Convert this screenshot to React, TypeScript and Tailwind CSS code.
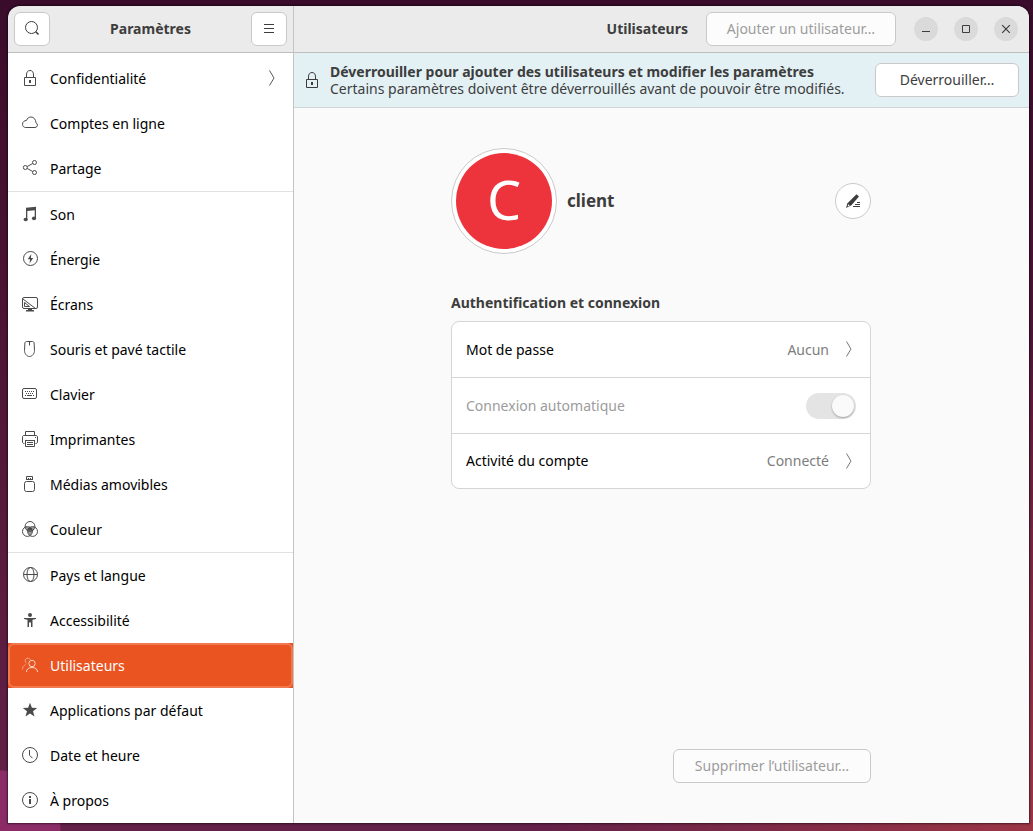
import { useState } from "react";
import type { ReactNode } from "react";

function Icon({ children, size = 16 }: { children: ReactNode; size?: number }) {
  return (
    <svg
      width={size}
      height={size}
      viewBox="0 0 16 16"
      fill="none"
      stroke="currentColor"
      strokeWidth="1"
      aria-hidden="true"
      className="shrink-0"
    >
      {children}
    </svg>
  );
}

const LockIcon = () => (
  <Icon>
    <path d="M2.5 7.5h11v8h-11z" />
    <path d="M4.500 7.500V5a3.500 4.500 0 0 1 7 0v2.500" />
    <path d="M7 10h2v3H7z" fill="currentColor" stroke="none" />
  </Icon>
);

const CloudIcon = () => (
  <Icon>
    <path d="M3.800 12.500h9.200a2.500 2.500 0 0 0 .9-4.800C13.800 4.300 11.700 2 9 2 6.900 2 5.200 3.300 4.600 5.400 2.300 5.500.5 7.100.5 9.200c0 2 1.300 3.300 3.300 3.300z" />
  </Icon>
);

const ShareIcon = () => (
  <Icon>
    <circle cx="3.300" cy="7.500" r="2" />
    <circle cx="12.500" cy="2.500" r="2" />
    <circle cx="12.500" cy="12.500" r="2" />
    <path d="M5.100 6.600l5.600-3.100M5.100 8.400l5.600 3.100" />
  </Icon>
);

const MusicIcon = () => (
  <Icon>
    <g fill="currentColor" stroke="none">
      <path d="M4 1.800L14 .8v11.700h-1.300V4.200L5.300 5v8H4z" />
      <ellipse cx="3.700" cy="13.500" rx="2.100" ry="1.800" />
      <ellipse cx="12" cy="12.400" rx="2.100" ry="1.800" />
    </g>
  </Icon>
);

const PowerIcon = () => (
  <Icon>
    <circle cx="8.500" cy="7.500" r="7" />
    <path d="M9.300 3L5.700 8.300h2.400l-.6 4.200 3.700-5.400H8.900z" fill="currentColor" stroke="none" />
  </Icon>
);

const DisplayIcon = () => (
  <Icon>
    <rect x=".5" y="1.500" width="15" height="11" rx="1.500" />
    <path d="M1 3l12.500 9.500M2.500 6.500v4h5z" />
    <path d="M4 14h8v1.500H4zM6 12.500h4V15H6z" fill="currentColor" stroke="none" />
  </Icon>
);

const MouseIcon = () => (
  <Icon>
    <path d="M4.500.5h6c.8 0 1.500.6 1.600 1.500l.4 7.500c0 3-2.200 6-5 6s-5-3-5-6L2.900 2C3 1.100 3.700.5 4.500.5zM7.500.5v4" />
  </Icon>
);

const KeyboardIcon = () => (
  <Icon>
    <rect x=".5" y="2.500" width="14" height="10" rx="1.500" />
    <path d="M3 5.500h9M4 7.500h8" strokeDasharray="1 1" />
    <path d="M3 9.500h1M5 9.500h5M11 9.500h1" />
  </Icon>
);

const PrinterIcon = () => (
  <Icon>
    <path d="M3.500 4V.5h9V4M2.500 12.500h-.5c-.8 0-1.500-.7-1.500-1.500V6c0-.9.6-1.500 1.500-1.500h12c.9 0 1.500.6 1.500 1.500v5c0 .8-.7 1.500-1.500 1.500h-.5" />
    <path d="M3.500 9.500v6h9v-6M3 9.500h10M5 11.500h6M5 13.500h6M13 6.500h1" />
  </Icon>
);

const UsbIcon = () => (
  <Icon>
    <rect x="2.500" y="5.500" width="10" height="10" rx="2" />
    <path d="M4.500 3V.5h6V3M4 3.500h7M6 2.500h1M8 2.500h1" />
  </Icon>
);

const ColorIcon = () => (
  <Icon>
    <path d="M3.200 5.500L8 6.500l4.800-1L11 10.500 8 15l-3-4.500z" fill="currentColor" stroke="none" opacity=".55" />
    <circle cx="8" cy="5.400" r="4.900" />
    <circle cx="5.400" cy="10.500" r="4.900" />
    <circle cx="10.600" cy="10.500" r="4.900" />
    <path d="M6 7l2-.8L10 7l.5 2.500H5.500z" fill="currentColor" stroke="none" />
  </Icon>
);

const GlobeIcon = () => (
  <Icon>
    <circle cx="8.500" cy="7.500" r="7" />
    <ellipse cx="8.500" cy="7.500" rx="3.500" ry="7" />
    <path d="M1.500 7.500h14" />
  </Icon>
);

const AccessIcon = () => (
  <Icon>
    <g fill="currentColor" stroke="none">
      <circle cx="8" cy="3" r="2" />
      <path d="M2 6h12v1l-3.500.8V15H9v-4.500H7V15H5.500V7.800L2 7z" />
    </g>
  </Icon>
);

const UsersIcon = () => (
  <Icon>
    <g opacity=".6">
      <path d="M8.300 2.800A2.700 2.700 0 1 0 4.500 6.200M3.800 7.500C1.800 8.300.5 10 .5 12.500" />
    </g>
    <circle cx="10" cy="6.500" r="3.200" />
    <path d="M4.500 15c0-2.800 2-4.500 5.500-4.500s5.500 1.700 5.500 4.500" />
  </Icon>
);

const StarIcon = () => (
  <Icon>
    <path
      d="M8 .8l1.900 5 5.300.2-4.200 3.300 1.500 5.200L8 11.600l-4.500 2.900L5 9.300.8 6l5.300-.2z"
      fill="currentColor"
      stroke="none"
    />
  </Icon>
);

const ClockIcon = () => (
  <Icon>
    <circle cx="8" cy="8" r="7.500" />
    <path d="M7.500 3v5.200l3 3" />
  </Icon>
);

const InfoIcon = () => (
  <Icon>
    <circle cx="8" cy="8" r="7.500" />
    <path d="M7 4h2v2H7zM7 7h2v5H7z" fill="currentColor" stroke="none" />
  </Icon>
);

const Chevron = () => (
  <svg width="6" height="16" viewBox="0 0 6 16" fill="none" stroke="currentColor" aria-hidden="true">
    <path d="M.5.500L5 8 .5 15.500" />
  </svg>
);

type Item = { label: string; icon: () => ReactNode; chevron?: boolean };

const groups: Item[][] = [
  [
    { label: "Confidentialité", icon: LockIcon, chevron: true },
    { label: "Comptes en ligne", icon: CloudIcon },
    { label: "Partage", icon: ShareIcon },
  ],
  [
    { label: "Son", icon: MusicIcon },
    { label: "Énergie", icon: PowerIcon },
    { label: "Écrans", icon: DisplayIcon },
    { label: "Souris et pavé tactile", icon: MouseIcon },
    { label: "Clavier", icon: KeyboardIcon },
    { label: "Imprimantes", icon: PrinterIcon },
    { label: "Médias amovibles", icon: UsbIcon },
    { label: "Couleur", icon: ColorIcon },
  ],
  [
    { label: "Pays et langue", icon: GlobeIcon },
    { label: "Accessibilité", icon: AccessIcon },
    { label: "Utilisateurs", icon: UsersIcon },
    { label: "Applications par défaut", icon: StarIcon },
    { label: "Date et heure", icon: ClockIcon },
    { label: "À propos", icon: InfoIcon },
  ],
];

function Sidebar() {
  const [selected, setSelected] = useState("Utilisateurs");
  return (
    <nav className="flex-1 bg-white pt-[3px]" aria-label="Paramètres">
      {groups.map((group, index) => (
        <ul key={index} className={index > 0 ? "border-t border-[#e1e1e1]" : ""}>
          {group.map(({ label, icon: ItemIcon, chevron }) => {
            const active = label === selected;
            return (
              <li key={label} className={active ? "bg-[#e95420]" : ""}>
                <button
                  type="button"
                  aria-current={active ? "page" : undefined}
                  onClick={() => setSelected(label)}
                  className={
                    active
                      ? "flex h-[45px] w-full items-center gap-3 rounded-md px-[14px] text-left text-white outline-2 -outline-offset-2 outline-[#f0794f]"
                      : "flex h-[45px] w-full items-center gap-3 px-[14px] text-left text-black outline-none"
                  }
                >
                  <span className={active ? "pb-px text-[#fbd5c7]" : "pb-px text-[#4a4a4a]"}>
                    <ItemIcon />
                  </span>
                  <span className="flex-1">{label}</span>
                  {chevron && (
                    <span className="mr-1 pb-px text-[#555]">
                      <Chevron />
                    </span>
                  )}
                </button>
              </li>
            );
          })}
        </ul>
      ))}
    </nav>
  );
}

const headerButton =
  "flex h-[34px] items-center justify-center rounded-md border border-[#c9c9c9] bg-white pb-0.5 text-[#3d3d3d]";

const disabledButton =
  "h-[34px] rounded-md border border-[#c9c9c9] bg-[#fcfcfc] pb-0.5 text-[#9c9c9c]";

function WindowControl({ label, children }: { label: string; children: ReactNode }) {
  return (
    <button
      type="button"
      aria-label={label}
      className="flex size-6 items-center justify-center rounded-full bg-[#dadada] text-[#3d3d3d]"
    >
      {children}
    </button>
  );
}

function LinkRow({ label, value }: { label: string; value: string }) {
  return (
    <button type="button" className="flex h-14 w-full items-center px-[14px] pb-px text-left last:h-[54px]">
      <span className="flex-1 text-black">{label}</span>
      <span className="text-[#7d7d7d]">{value}</span>
      <span className="mr-1 ml-[17px] text-[#777]">
        <Chevron />
      </span>
    </button>
  );
}

export default function App() {
  return (
    <div className="flex min-h-screen flex-col bg-[radial-gradient(circle_at_0%_100%,#8c2c66_60px,transparent_61px),radial-gradient(circle_at_100%_100%,#9c3645,transparent_500px),linear-gradient(to_bottom,#3a0c2b,#45102f_20%,#5c1d40_75%,#632049)] pt-[6px] pr-1 pb-2 pl-2 font-['Noto_Sans',sans-serif] text-sm leading-[17px] text-[#3d3d3d]">
      <div className="flex flex-1 overflow-hidden rounded-t-xl shadow-[0_0_2px_1px_rgba(0,0,0,0.5)]">
        <aside className="flex w-[286px] shrink-0 flex-col border-r border-[#c4c4c4]">
          <header className="flex h-[47px] items-center justify-between border-b border-[#bfbfbf] bg-[#ebebeb] px-[6px]">
            <button type="button" aria-label="Rechercher" className={`${headerButton} w-9`}>
              <Icon>
                <circle cx="7.500" cy="7.500" r="6" />
                <path d="M11.800 11.800l2.700 2.700" strokeWidth="1.600" />
              </Icon>
            </button>
            <h1 className="pb-0.5 font-bold">Paramètres</h1>
            <button type="button" aria-label="Menu" className={`${headerButton} w-9`}>
              <Icon>
                <path d="M3 4.500h10M3 8.500h10M3 12.500h10" />
              </Icon>
            </button>
          </header>
          <Sidebar />
        </aside>

        <main className="flex min-w-0 flex-1 flex-col bg-[#fafafa]">
          <header className="flex h-[47px] shrink-0 items-center justify-end border-b border-[#bfbfbf] bg-[#ebebeb] pr-[11px]">
            <h2 className="mr-[18px] pb-0.5 font-bold">Utilisateurs</h2>
            <button type="button" disabled className={`${disabledButton} mr-[18px] w-[190px]`}>
              Ajouter un utilisateur…
            </button>
            <div className="flex gap-4">
              <WindowControl label="Réduire">
                <Icon>
                  <path d="M4 10.500h8" />
                </Icon>
              </WindowControl>
              <WindowControl label="Agrandir">
                <Icon>
                  <path d="M4.500 4.500h7v7h-7z" />
                </Icon>
              </WindowControl>
              <WindowControl label="Fermer">
                <Icon>
                  <path d="M4.200 4.200l7.600 7.600M11.800 4.200l-7.600 7.600" strokeWidth="1.200" />
                </Icon>
              </WindowControl>
            </div>
          </header>

          <section className="flex h-[55px] shrink-0 items-center gap-[10px] border-b border-[#cfd4d6] bg-[#e3f1f5] px-[10px]">
            <LockIcon />
            <div className="min-w-0 flex-1 whitespace-nowrap">
              <p className="font-bold">Déverrouiller pour ajouter des utilisateurs et modifier les paramètres</p>
              <p>Certains paramètres doivent être déverrouillés avant de pouvoir être modifiés.</p>
            </div>
            <button type="button" className={`${headerButton} w-36 shrink-0`}>
              Déverrouiller…
            </button>
          </section>

          <div className="flex flex-1 justify-center pt-10 pr-px pb-10">
            <div className="flex w-full max-w-[420px] flex-col">
              <div className="flex items-center">
                <button
                  type="button"
                  aria-label="Modifier l’avatar"
                  className="flex size-[106px] items-center justify-center rounded-full border border-[#c9c9c9] bg-white p-1"
                >
                  <span className="flex size-full items-center justify-center rounded-full bg-[#ed333b] pb-1 text-[54px] leading-none text-white">
                    C
                  </span>
                </button>
                <h3 className="ml-[10px] flex-1 pb-0.5 text-[17px] font-bold">client</h3>
                <button
                  type="button"
                  aria-label="Modifier le nom"
                  className="flex size-9 items-center justify-center rounded-full border border-[#c9c9c9] bg-white text-[#3d3d3d]"
                >
                  <Icon>
                    <path
                      d="M11.500 1.200l2.500 2.300-7.600 8.700L1 15l1.500-4.800z"
                      fill="currentColor"
                      stroke="none"
                    />
                    <path d="M12 9.500h3M10 11.500h5M8 13.500h7" />
                    <path d="M3.300 11.200l1.400 1.300-2 1z" fill="#fff" stroke="none" />
                  </Icon>
                </button>
              </div>

              <h4 className="mt-10 font-bold">Authentification et connexion</h4>
              <div className="mt-[10px] divide-y divide-[#d5d5d5] rounded-lg border border-[#d5d5d5] bg-white">
                <LinkRow label="Mot de passe" value="Aucun" />
                <label className="flex h-14 items-center justify-between px-[14px] text-[#9c9c9c]">
                  Connexion automatique
                  <input
                    type="checkbox"
                    role="switch"
                    defaultChecked
                    disabled
                    className="h-[26px] w-[50px] appearance-none rounded-full bg-[#e4e4e4] p-0.5 before:ml-auto before:block before:size-[22px] before:rounded-full before:bg-[#fafafa] before:shadow-[0_1px_2px_rgba(0,0,0,0.3)]"
                  />
                </label>
                <LinkRow label="Activité du compte" value="Connecté" />
              </div>

              <button type="button" disabled className={`${disabledButton} mt-auto w-[198px] self-end`}>
                Supprimer l’utilisateur…
              </button>
            </div>
          </div>
        </main>
      </div>
    </div>
  );
}
